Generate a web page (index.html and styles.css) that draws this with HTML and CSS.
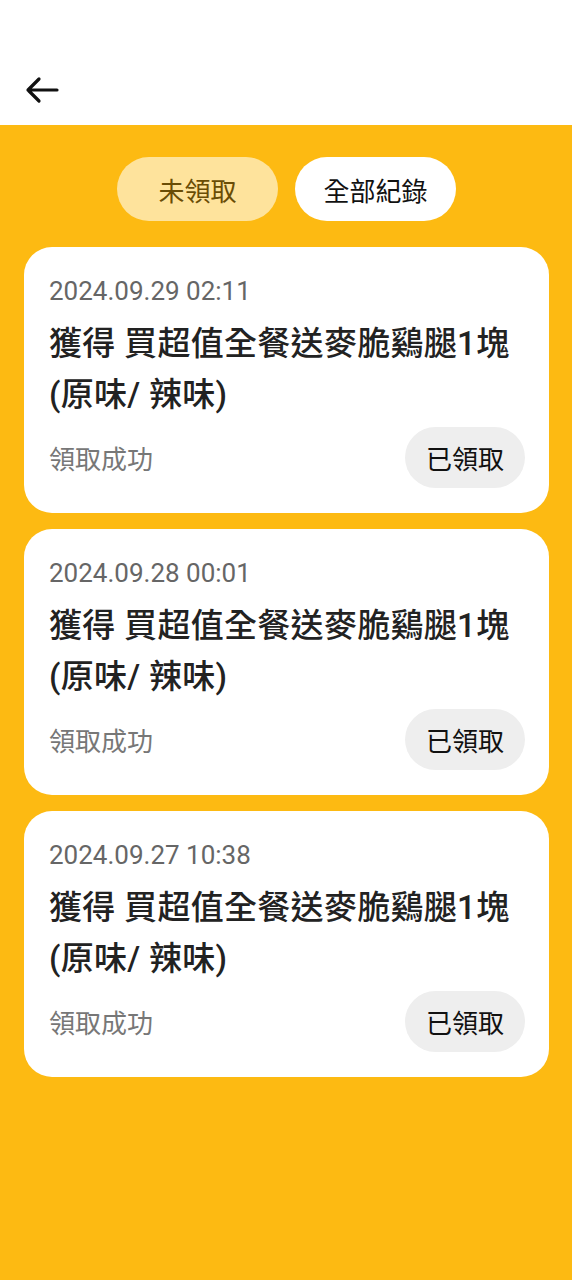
FILE: index.html
```html
<!DOCTYPE html>
<html>
<head>
    <link rel="stylesheet" href="styles.css">
</head>
<body>
    <div class="header">
        <svg class="back" width="34" height="28" viewBox="0 0 34 28">
            <path d="M32 14H3M14 3L3 14l11 11" fill="none" stroke="#111" stroke-width="3.2" stroke-linecap="round" stroke-linejoin="round"/>
        </svg>
    </div>

    <div class="content">
        <div class="tabs">
            <div class="tab active">未領取</div>
            <div class="tab">全部紀錄</div>
        </div>

        <div class="list">
            <div class="card">
                <div class="date">2024.09.29 02:11</div>
                <div class="title">獲得 買超值全餐送麥脆鷄腿1塊(原味/ 辣味)</div>
                <div class="card-foot">
                    <span class="status">領取成功</span>
                    <span class="claimed">已領取</span>
                </div>
            </div>
            <div class="card">
                <div class="date">2024.09.28 00:01</div>
                <div class="title">獲得 買超值全餐送麥脆鷄腿1塊(原味/ 辣味)</div>
                <div class="card-foot">
                    <span class="status">領取成功</span>
                    <span class="claimed">已領取</span>
                </div>
            </div>
            <div class="card">
                <div class="date">2024.09.27 10:38</div>
                <div class="title">獲得 買超值全餐送麥脆鷄腿1塊(原味/ 辣味)</div>
                <div class="card-foot">
                    <span class="status">領取成功</span>
                    <span class="claimed">已領取</span>
                </div>
            </div>
        </div>
    </div>
</body>
</html>
```

FILE: styles.css
```css
body {
    margin: 0;
    font-family: Roboto, "Noto Sans CJK TC", sans-serif;
    background: #fdba12;
    min-height: 1280px;
}
.header {
    height: 125px;
    background: #fff;
    display: flex;
    align-items: flex-end;
}
.back {
    margin: 0 0 21px 25px;
}
.content {
    padding: 32px 23px 0 24px;
}
.tabs {
    display: flex;
    justify-content: center;
    gap: 17px;
}
.tab {
    width: 161px;
    height: 64px;
    border-radius: 32px;
    background: #fff;
    color: #111;
    font-size: 26px;
    display: flex;
    align-items: center;
    justify-content: center;
}
.tab.active {
    background: #fee39c;
    color: #6a4d05;
}
.list {
    margin-top: 26px;
    display: flex;
    flex-direction: column;
    gap: 16.5px;
}
.card {
    background: #fff;
    border-radius: 28px;
    padding: 26px 24px 24.5px 25px;
}
.date {
    font-size: 26px;
    line-height: 36px;
    color: #666;
}
.title {
    margin-top: 9px;
    font-size: 33px;
    line-height: 51px;
    letter-spacing: 0.3px;
    font-weight: 500;
    color: #222;
}
.card-foot {
    margin-top: 7px;
    display: flex;
    justify-content: space-between;
    align-items: center;
}
.status {
    font-size: 26px;
    color: #777;
}
.claimed {
    width: 120px;
    height: 61px;
    border-radius: 31px;
    background: #eee;
    font-size: 26px;
    color: #111;
    display: flex;
    align-items: center;
    justify-content: center;
}
```
